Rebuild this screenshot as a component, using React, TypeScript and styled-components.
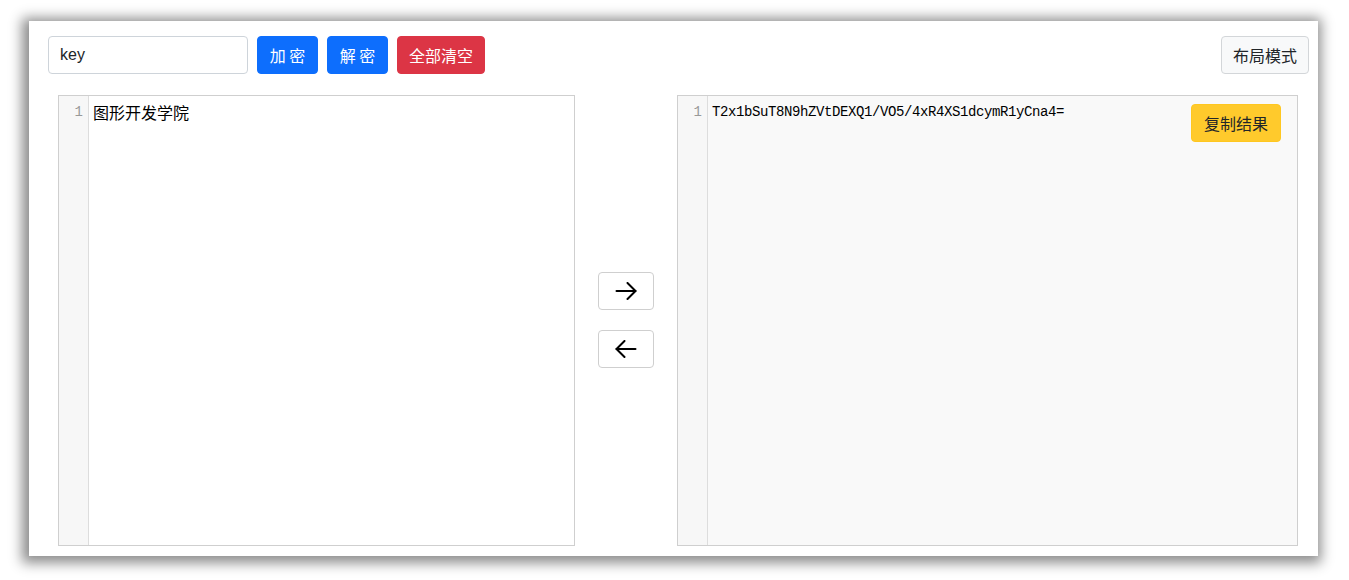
import React, { useState } from 'react';
import styled, { createGlobalStyle } from 'styled-components';

const GlobalStyle = createGlobalStyle`
  html, body {
    margin: 0;
    padding: 0;
    background: #ffffff;
  }
  body {
    font-family: "Liberation Sans", "Noto Sans CJK SC", Arial, sans-serif;
  }
  * {
    box-sizing: border-box;
  }
`;

const Page = styled.div`
  padding: 21px 31px 25px 29px;
`;

const Panel = styled.div`
  width: 1289px;
  height: 535px;
  background: #fff;
  box-shadow: -2px 2px 12px 5px rgba(0, 0, 0, 0.45);
  padding: 15px 9px 10px 19px;
  display: flex;
  flex-direction: column;
`;

const Toolbar = styled.div`
  display: flex;
  align-items: center;
  gap: 9px;
  height: 38px;
`;

const KeyInput = styled.input`
  width: 200px;
  height: 38px;
  border: 1px solid #ced4da;
  border-radius: 4px;
  padding: 0 11px;
  font-family: "Liberation Sans", Arial, sans-serif;
  font-size: 16px;
  color: #212529;
  outline: none;
`;

const variants = {
  primary: { bg: '#0d6efd', border: '#0d6efd', color: '#fff' },
  danger: { bg: '#dc3545', border: '#dc3545', color: '#fff' },
  light: { bg: '#f8f9fa', border: '#d3d6d9', color: '#212529' },
  warning: { bg: '#ffca2c', border: '#ffc720', color: '#212529' },
  plain: { bg: '#fff', border: '#cfcfcf', color: '#000' },
};

type Variant = keyof typeof variants;

const Button = styled.button<{ $variant: Variant }>`
  height: 38px;
  min-width: 61px;
  padding: 0 11px;
  border-radius: 4px;
  border: 1px solid ${p => variants[p.$variant].border};
  background: ${p => variants[p.$variant].bg};
  color: ${p => variants[p.$variant].color};
  font-family: "Noto Sans CJK SC", "Liberation Sans", sans-serif;
  font-size: 16px;
  line-height: 1;
  cursor: pointer;
  white-space: pre;
  display: inline-flex;
  align-items: center;
  justify-content: center;
`;

const Spacer = styled.div`
  flex: 1;
`;

const EditorRow = styled.div`
  flex: 1;
  display: grid;
  grid-template-columns: 517px 102px 1fr;
  margin: 21px 11px 0 10px;
  min-height: 0;
`;

const Editor = styled.div<{ $readOnly?: boolean }>`
  position: relative;
  display: flex;
  border: 1px solid #cfcfcf;
  background: ${p => (p.$readOnly ? '#f9f9f9' : '#fff')};
  overflow: hidden;
`;

const Gutter = styled.div`
  width: 30px;
  flex-shrink: 0;
  background: #f7f7f7;
  border-right: 1px solid #dddddd;
  padding-top: 6px;
  padding-right: 5px;
  text-align: right;
  color: #999;
  font-family: "Liberation Mono", monospace;
  font-size: 14px;
  line-height: 20px;
`;

const Content = styled.div`
  flex: 1;
  padding: 6px 4px;
  color: #000;
`;

const Line = styled.div<{ $cjk?: boolean }>`
  font-family: ${p =>
    p.$cjk ? '"Noto Sans CJK SC", sans-serif' : '"Liberation Mono", monospace'};
  font-size: ${p => (p.$cjk ? '16px' : '14px')};
  letter-spacing: ${p => (p.$cjk ? '0' : '-0.4px')};
  line-height: 20px;
  white-space: pre;
`;

const CopyButton = styled(Button)`
  position: absolute;
  top: 8px;
  right: 16px;
  width: 90px;
`;

const Middle = styled.div`
  display: flex;
  flex-direction: column;
  align-items: center;
  justify-content: center;
  gap: 20px;
  padding-bottom: 2px;
`;

const ArrowButton = styled(Button)`
  width: 56px;
  min-width: 0;
  padding: 0;
`;

const Arrow = ({ dir }: { dir: 'right' | 'left' }) => (
  <svg
    width="22"
    height="18"
    viewBox="0 0 22 18"
    fill="none"
    stroke="#000"
    strokeWidth="2"
    strokeLinecap="round"
    strokeLinejoin="round"
    style={dir === 'left' ? { transform: 'scaleX(-1)' } : undefined}
  >
    <path d="M1.5 9h19" />
    <path d="M12.5 1l8 8-8 8" />
  </svg>
);

export default function App() {
  const [key, setKey] = useState('key');
  const source = '图形开发学院';
  const result = 'T2x1bSuT8N9hZVtDEXQ1/VO5/4xR4XS1dcymR1yCna4=';

  return (
    <>
      <GlobalStyle />
      <Page>
        <Panel>
          <Toolbar>
            <KeyInput value={key} onChange={e => setKey(e.target.value)} />
            <Button $variant="primary">加 密</Button>
            <Button $variant="primary">解 密</Button>
            <Button $variant="danger">全部清空</Button>
            <Spacer />
            <Button $variant="light">布局模式</Button>
          </Toolbar>
          <EditorRow>
            <Editor>
              <Gutter>1</Gutter>
              <Content>
                <Line $cjk>{source}</Line>
              </Content>
            </Editor>
            <Middle>
              <ArrowButton $variant="plain">
                <Arrow dir="right" />
              </ArrowButton>
              <ArrowButton $variant="plain">
                <Arrow dir="left" />
              </ArrowButton>
            </Middle>
            <Editor $readOnly>
              <Gutter>1</Gutter>
              <Content>
                <Line>{result}</Line>
              </Content>
              <CopyButton $variant="warning">复制结果</CopyButton>
            </Editor>
          </EditorRow>
        </Panel>
      </Page>
    </>
  );
}
